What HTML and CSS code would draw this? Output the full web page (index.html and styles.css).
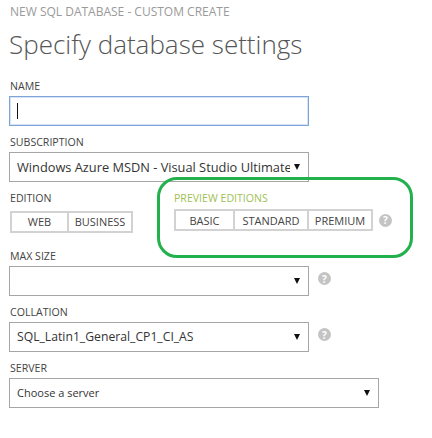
FILE: index.html
```html
<!DOCTYPE html>
<html>
<head>
<meta charset="utf-8">
<link rel="stylesheet" href="styles.css">
</head>
<body>
<div class="page">
  <div class="crumb">NEW SQL DATABASE - CUSTOM CREATE</div>
  <h1 class="title">Specify database settings</h1>

  <div class="field">
    <div class="label">NAME</div>
    <div class="box input"><span class="caret"></span></div>
  </div>

  <div class="field">
    <div class="label">SUBSCRIPTION</div>
    <div class="box select"><span class="value big">Windows Azure MSDN - Visual Studio Ultimate</span><span class="arrow"></span></div>
  </div>

  <div class="edition-row">
    <div class="edition-col">
      <div class="label">EDITION</div>
      <div class="seg">
        <span class="seg-btn w-web">WEB</span><span class="seg-btn w-business">BUSINESS</span>
      </div>
    </div>
    <div class="preview-col">
      <div class="label preview">PREVIEW EDITIONS</div>
      <div class="seg-line">
        <div class="seg">
          <span class="seg-btn w-basic">BASIC</span><span class="seg-btn w-standard">STANDARD</span><span class="seg-btn w-premium">PREMIUM</span>
        </div>
        <span class="help">?</span>
      </div>
    </div>
    <div class="annot"></div>
  </div>

  <div class="field">
    <div class="label">MAX SIZE</div>
    <div class="line">
      <div class="box select"><span class="value"></span><span class="arrow"></span></div>
      <span class="help">?</span>
    </div>
  </div>

  <div class="field">
    <div class="label">COLLATION</div>
    <div class="line">
      <div class="box select"><span class="value mid">SQL_Latin1_General_CP1_CI_AS</span><span class="arrow"></span></div>
      <span class="help">?</span>
    </div>
  </div>

  <div class="field">
    <div class="label">SERVER</div>
    <div class="box select wide"><span class="value small">Choose a server</span><span class="arrow"></span></div>
  </div>
</div>
</body>
</html>
```
FILE: styles.css
```css
* { box-sizing: border-box; }
html, body { margin: 0; padding: 0; background: #fff; }
body {
  font-family: "Open Sans", "Noto Sans", sans-serif;
  color: #444;
  width: 432px;
  height: 438px;
  overflow: hidden;
}
.page { padding: 4px 0 0 9px; }
.crumb {
  font-size: 12px;
  line-height: 15px;
  color: #9a9a9a;
  padding-left: 1px;
}
.title {
  margin: 7px 0 17px 0;
  font-size: 26px;
  font-weight: 300;
  line-height: 36px;
  color: #555;
}
.field { margin-top: 9px; }
.label {
  font-size: 10.6px;
  line-height: 14px;
  color: #444;
  padding-left: 1px;
  margin-bottom: 3px;
}
.box {
  height: 30px;
  width: 300px;
  border: 1px solid #a6a6a6;
  background: #fff;
  display: flex;
  align-items: center;
}
.box.wide { width: 370px; }
.input {
  border-color: #7ea3d6;
  box-shadow: inset 0 0 0 1px #d6e3f5;
}
.caret {
  width: 1px;
  height: 16px;
  background: #111;
  margin-left: 7px;
}
.select { padding: 0 8px 0 7px; }
.value {
  flex: 1;
  white-space: nowrap;
  overflow: hidden;
  color: #333;
}
.value.big { font-size: 12.8px; }
.value.mid { font-size: 12.2px; }
.value.small { font-size: 11px; }
.arrow {
  width: 0;
  height: 0;
  border-left: 3.5px solid transparent;
  border-right: 3.5px solid transparent;
  border-top: 6px solid #111;
  margin-left: 4px;
}
.line { display: flex; align-items: center; }
.help {
  display: inline-flex;
  align-items: center;
  justify-content: center;
  width: 13px;
  height: 13px;
  border-radius: 50%;
  background: #c4c4c4;
  color: #fff;
  font-size: 10px;
  font-weight: 700;
  line-height: 1;
  margin-left: 9px;
  margin-top: -4px;
}
.edition-row {
  position: relative;
  display: flex;
  margin-top: 9px;
  margin-bottom: 16px;
}
.edition-row .label { margin-bottom: 4px; }
.edition-col { width: 164px; }
.label.preview { color: #9fbf55; }
.seg {
  display: inline-flex;
  border: 2px solid #d2d2d2;
  height: 22px;
  margin-left: 1px;
}
.seg-btn {
  display: flex;
  align-items: center;
  justify-content: center;
  font-size: 11px;
  color: #444;
  border-left: 2px solid #d2d2d2;
}
.seg-btn:first-child { border-left: none; }
.w-web { width: 55px; }
.w-business { width: 64px; }
.w-basic { width: 57px; }
.w-standard { width: 74px; }
.w-premium { width: 64px; }
.seg-line { display: flex; align-items: center; }
.seg-line .help { margin-left: 6px; margin-top: 0; }
.annot {
  position: absolute;
  left: 148px;
  top: -14px;
  width: 256px;
  height: 81px;
  border: 3px solid #22b14c;
  border-radius: 20px;
  pointer-events: none;
}
```
